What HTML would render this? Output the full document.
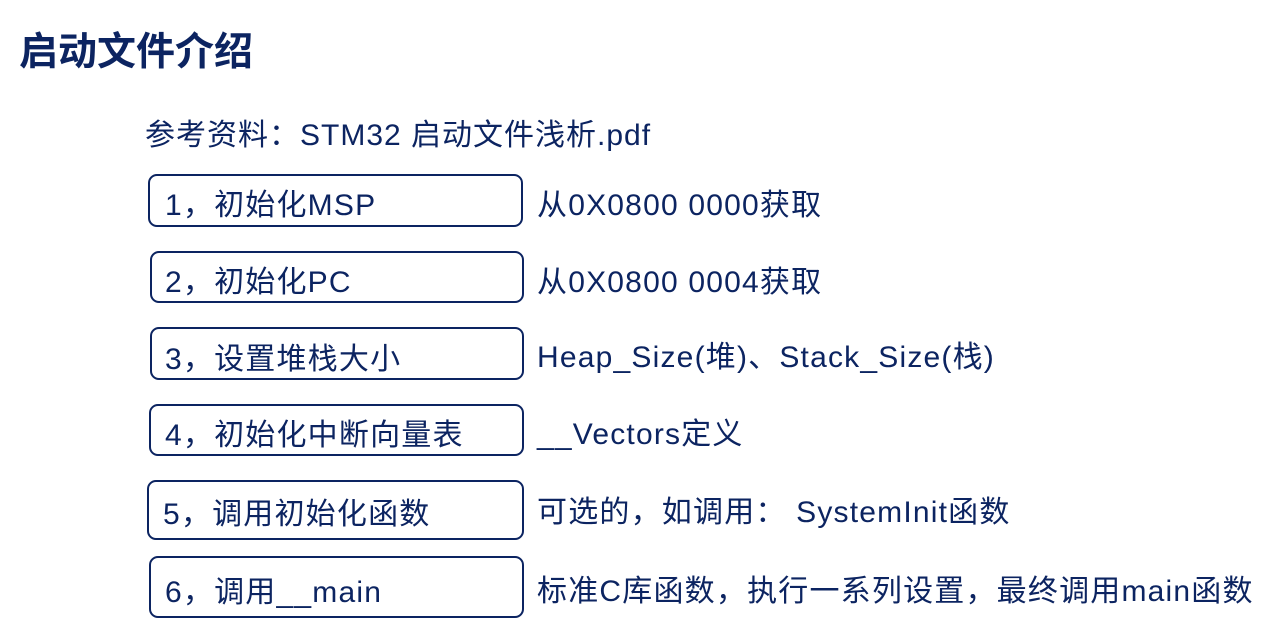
<!DOCTYPE html>
<html><head><meta charset="utf-8"><style>
body{margin:0;width:1271px;height:638px;background:#fff;position:relative;overflow:hidden;font-family:"Liberation Sans","Noto Sans CJK SC",sans-serif;color:#0c2461}
.t{position:absolute;white-space:nowrap}
.b{position:absolute;border:2px solid #0c2461;border-radius:9px;box-sizing:border-box;left:149px;width:375px}
.bt,.rt{position:absolute;font-size:30px;letter-spacing:1.2px;white-space:nowrap}
.bt{left:165px}
.rt{left:537px}
</style></head><body>
<div class="t" style="left:19px;top:21px;font-size:39px;font-weight:bold;">启动文件介绍</div>
<div class="t" style="left:145px;top:110px;font-size:30px;letter-spacing:1px">参考资料：STM32 启动文件浅析.pdf</div>

<div class="b" style="top:174px;height:53px;left:148px"></div>
<div class="bt" style="top:180px">1，初始化MSP</div>
<div class="rt" style="top:180px">从0X0800 0000获取</div>

<div class="b" style="top:251px;height:52px;left:150px;width:374px"></div>
<div class="bt" style="top:257px">2，初始化PC</div>
<div class="rt" style="top:257px">从0X0800 0004获取</div>

<div class="b" style="top:327px;height:53px;left:150px;width:374px"></div>
<div class="bt" style="top:334px">3，设置堆栈大小</div>
<div class="rt" style="top:332px">Heap_Size(堆)、Stack_Size(栈)</div>

<div class="b" style="top:404px;height:52px"></div>
<div class="bt" style="top:410px">4，初始化中断向量表</div>
<div class="rt" style="top:409px">__Vectors定义</div>

<div class="b" style="top:480px;height:60px;left:147px;width:377px"></div>
<div class="bt" style="top:489px;left:163px">5，调用初始化函数</div>
<div class="rt" style="top:487px">可选的，如调用： SystemInit函数</div>

<div class="b" style="top:556px;height:62px"></div>
<div class="bt" style="top:567px">6，调用__main</div>
<div class="rt" style="top:566px">标准C库函数，执行一系列设置，最终调用main函数</div>
</body></html>
